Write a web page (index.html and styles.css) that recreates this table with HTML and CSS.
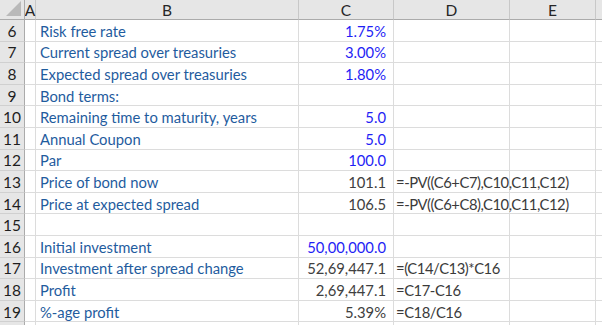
FILE: index.html
```html
<!DOCTYPE html>
<html>
<head>
<meta charset="utf-8">
<link rel="stylesheet" href="styles.css">
</head>
<body>
<div class="sheet">
  <div class="hdr corner"><span class="tri"></span></div>
  <div class="hdr col">A</div>
  <div class="hdr col">B</div>
  <div class="hdr col">C</div>
  <div class="hdr col">D</div>
  <div class="hdr col">E</div>
  <div class="hdr col last"></div>

  <div class="rh">6</div><div class="c"></div><div class="c lbl">Risk free rate</div><div class="c num in">1.75%</div><div class="c f"></div><div class="c"></div><div class="c last"></div>
  <div class="rh">7</div><div class="c"></div><div class="c lbl">Current spread over treasuries</div><div class="c num in">3.00%</div><div class="c f"></div><div class="c"></div><div class="c last"></div>
  <div class="rh">8</div><div class="c"></div><div class="c lbl">Expected spread over treasuries</div><div class="c num in">1.80%</div><div class="c f"></div><div class="c"></div><div class="c last"></div>
  <div class="rh">9</div><div class="c"></div><div class="c lbl">Bond terms:</div><div class="c num"></div><div class="c f"></div><div class="c"></div><div class="c last"></div>
  <div class="rh">10</div><div class="c"></div><div class="c lbl">Remaining time to maturity, years</div><div class="c num in">5.0</div><div class="c f"></div><div class="c"></div><div class="c last"></div>
  <div class="rh">11</div><div class="c"></div><div class="c lbl">Annual Coupon</div><div class="c num in">5.0</div><div class="c f"></div><div class="c"></div><div class="c last"></div>
  <div class="rh">12</div><div class="c"></div><div class="c lbl">Par</div><div class="c num in">100.0</div><div class="c f"></div><div class="c"></div><div class="c last"></div>
  <div class="rh">13</div><div class="c"></div><div class="c lbl">Price of bond now</div><div class="c num calc">101.1</div><div class="c f">=-PV((C6+C7),C10,C11,C12)</div><div class="c"></div><div class="c last"></div>
  <div class="rh">14</div><div class="c"></div><div class="c lbl">Price at expected spread</div><div class="c num calc">106.5</div><div class="c f">=-PV((C6+C8),C10,C11,C12)</div><div class="c"></div><div class="c last"></div>
  <div class="rh">15</div><div class="c"></div><div class="c lbl"></div><div class="c num"></div><div class="c f"></div><div class="c"></div><div class="c last"></div>
  <div class="rh">16</div><div class="c"></div><div class="c lbl">Initial investment</div><div class="c num in">50,00,000.0</div><div class="c f"></div><div class="c"></div><div class="c last"></div>
  <div class="rh">17</div><div class="c"></div><div class="c lbl">Investment after spread change</div><div class="c num calc">52,69,447.1</div><div class="c f">=(C14/C13)*C16</div><div class="c"></div><div class="c last"></div>
  <div class="rh">18</div><div class="c"></div><div class="c lbl">Profit</div><div class="c num calc">2,69,447.1</div><div class="c f">=C17-C16</div><div class="c"></div><div class="c last"></div>
  <div class="rh">19</div><div class="c"></div><div class="c lbl">%-age profit</div><div class="c num calc">5.39%</div><div class="c f">=C18/C16</div><div class="c"></div><div class="c last"></div>
  <div class="rh"></div><div class="c"></div><div class="c lbl"></div><div class="c num"></div><div class="c f"></div><div class="c"></div><div class="c last"></div>
</div>
</body>
</html>
```

FILE: styles.css
```css
html, body {
  margin: 0;
  padding: 0;
  background: #ffffff;
  overflow: hidden;
}
.sheet {
  width: 602px;
  height: 325px;
  overflow: hidden;
  display: grid;
  grid-template-columns: 25px 11px 263px 95px 116px 86px 20px;
  grid-template-rows: 20px repeat(15, 21.6px);
  font-family: Lato, "Open Sans", sans-serif;
  font-size: 14.8px;
}
.hdr {
  box-sizing: border-box;
  background: #e6e6e6;
  border-bottom: 1px solid #ababab;
  border-right: 1px solid #c8c8c8;
  color: #262626;
  display: flex;
  align-items: center;
  justify-content: center;
  font-size: 15.5px;
  padding-top: 1px;
}
.hdr.last { border-right: none; }
.corner {
  position: relative;
  border-right: 1px solid #ababab;
}
.tri {
  position: absolute;
  right: 3px;
  bottom: 3px;
  width: 0;
  height: 0;
  border-left: 15px solid transparent;
  border-bottom: 15px solid #b9b9b9;
}
.rh {
  box-sizing: border-box;
  background: #e6e6e6;
  border-right: 1px solid #ababab;
  border-bottom: 1px solid #d0d0d0;
  color: #1e1e1e;
  display: flex;
  align-items: center;
  justify-content: center;
  font-size: 15.5px;
  padding-top: 1px;
}
.c {
  box-sizing: border-box;
  border-right: 1px solid #dcdcdc;
  border-bottom: 1px solid #dcdcdc;
  display: flex;
  align-items: center;
  white-space: nowrap;
  overflow: visible;
  padding-top: 1px;
}
.c.last { border-right: none; }
.lbl {
  color: #1f5c9e;
  padding-left: 4px;
}
.num {
  justify-content: flex-end;
  padding-right: 7px;
}
.in { color: #1f1ff5; }
.calc { color: #404040; }
.f {
  color: #3a3a3a;
  padding-left: 2px;
  letter-spacing: -0.45px;
}
```
